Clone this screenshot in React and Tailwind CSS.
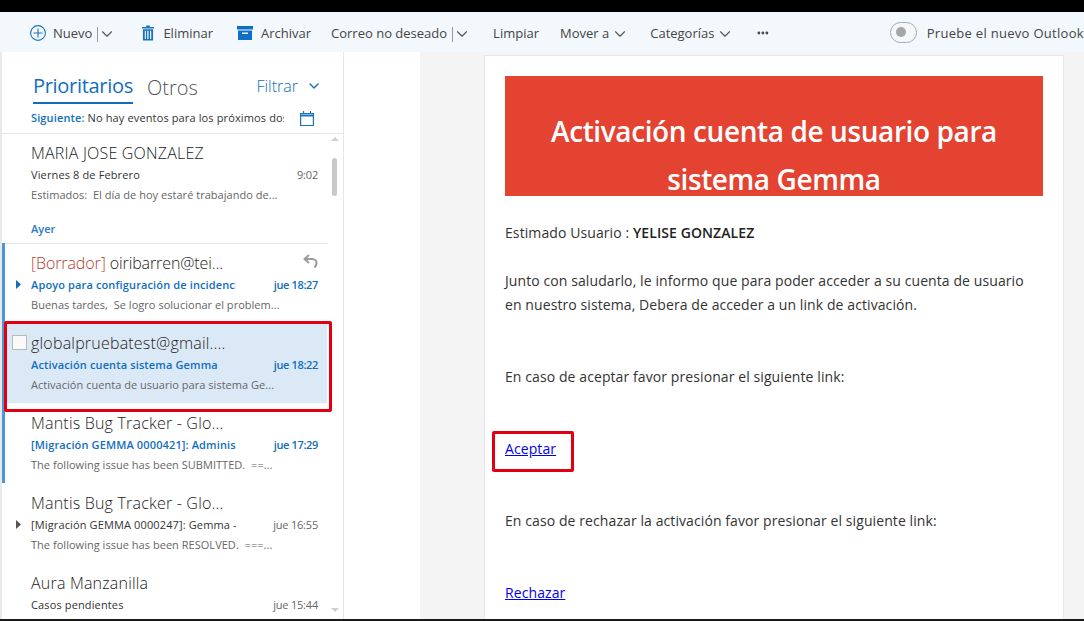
import { ChevronDown, Ellipsis } from 'lucide-react'

const font = { fontFamily: '"Open Sans", "Noto Sans", sans-serif' }

function ToolbarItem({ icon, label, split, caret, className = '' }) {
  return (
    <div className={`flex items-center text-[13px] text-[#444] ${className}`}>
      {icon}
      <span>{label}</span>
      {split && <span className="ml-[5px] h-[15px] w-px bg-[#999]"></span>}
      {caret && <ChevronDown size={18} strokeWidth={1.5} className={`text-[#555] ${split ? '' : 'ml-[2px]'}`} />}
    </div>
  )
}

function Row({ name, draft, subject, time, preview, unread, bar, selected, expand, reply, check }) {
  return (
    <div className={`relative h-20 w-[325px] pl-[29px] pr-[9px] ${selected ? 'bg-[#dbe9f7]' : ''}`}>
      {bar && <div className="absolute left-0 top-0 h-full w-[3px] bg-[#4a98d8]"></div>}
      {check && <div className="absolute left-[10px] top-[12px] h-[15px] w-[15px] border border-[#b9b9b9] bg-[#f9f9f9]"></div>}
      {expand && (
        <svg className="absolute left-[14px] top-[37px]" width="5" height="9" viewBox="0 0 5 9">
          <path d="M0 0l5 4.5L0 9z" fill={unread ? '#106ebe' : '#555'} />
        </svg>
      )}
      {reply && (
        <svg className="absolute right-[9px] top-[11px]" width="15" height="14" viewBox="0 0 15 14" fill="none" stroke="#9a9a9a" strokeWidth="2">
          <path d="M6 1L1.5 5 6 9" />
          <path d="M2 5h7c3 0 4.500 2 4.500 4s-1 3.500-2 4.500" />
        </svg>
      )}
      <div className={`h-[32px] whitespace-nowrap pt-[8px] text-[16px] font-light leading-[24px] text-[#222] ${draft ? 'tracking-[-0.1px]' : 'tracking-[0.2px]'}`}>
        {draft && <span className="text-[#b5392b]">[Borrador] </span>}
        {name}
      </div>
      <div className="flex h-[20px] items-center justify-between text-[11px] leading-[20px]">
        <span className={`w-[205px] overflow-hidden whitespace-nowrap tracking-[0.13px] ${unread ? 'font-semibold text-[#106ebe]' : 'text-[#333]'}`}>{subject}</span>
        <span className={unread ? 'font-semibold tracking-[-0.35px] text-[#106ebe]' : 'tracking-[-0.2px] text-[#666]'}>{time}</span>
      </div>
      <div className="whitespace-pre text-[11px] leading-[20px] tracking-[0.03px] text-[#666]">{preview}</div>
    </div>
  )
}

export default function App() {
  return (
    <div style={font} className="relative flex h-[621px] w-[1084px] flex-col overflow-hidden bg-white">
      <div className="h-3 shrink-0 bg-black"></div>

      {/* toolbar */}
      <div className="flex h-[40px] shrink-0 items-center whitespace-nowrap bg-[#f3f8fc] pl-[30px] pt-[4px]">
        <ToolbarItem
          label="Nuevo"
          split
          caret
          icon={
            <svg className="mr-[7px] -mt-[2px]" width="16" height="16" viewBox="0 0 16 16" fill="none" stroke="#1a73bd" strokeWidth="1.1">
              <circle cx="8" cy="8" r="7.400" />
              <path d="M8 3.500v9M3.500 8h9" />
            </svg>
          }
        />
        <ToolbarItem
          className="ml-[26px]"
          label="Eliminar"
          icon={
            <svg className="mr-[9px] -mt-[2px]" width="12" height="16" viewBox="0 0 13 16" fill="#1a73bd">
              <path d="M4.500 0h4v1.500H13v1.500H0V1.500h4.500z" />
              <path d="M1 4h11v12H1zM3 5.500v9h1.200v-9zm2.700 0v9h1.400v-9zm3 0v9h1.300v-9z" fillRule="evenodd" />
            </svg>
          }
        />
        <ToolbarItem
          className="ml-[24px]"
          label="Archivar"
          icon={
            <svg className="mr-[8px] -mt-[2px]" width="16" height="14" viewBox="0 0 16 14" fill="#0f6fc6">
              <path d="M0 0h16v3.500H0z" />
              <path d="M1 4.500h14V14H1zM5 6.500v1.500h6V6.500z" fillRule="evenodd" />
            </svg>
          }
        />
        <ToolbarItem className="ml-[20px]" label="Correo no deseado" split caret />
        <ToolbarItem className="ml-[22px]" label="Limpiar" />
        <ToolbarItem className="ml-[21px]" label="Mover a" caret />
        <ToolbarItem className="ml-[21px]" label="Categorías" caret />
        <Ellipsis size={24} strokeWidth={3} className="ml-[22px] -mt-[2px] text-[#444]" />
        <div className="ml-[120px] -mt-[4px] flex h-[21px] w-[41px] items-center rounded-full border border-[#aaa] pl-[5px]">
          <div className="h-[10px] w-[10px] rounded-full bg-[#a6a6a6]"></div>
        </div>
        <div className="ml-[10px] text-[13px] tracking-[0.3px] text-[#444]">Pruebe el nuevo Outlook</div>
      </div>

      <div className="flex min-h-0 flex-1">
        {/* message list */}
        <div className="relative w-[344px] shrink-0 border-r border-l-2 border-[#e6e6e6] border-l-[#e9e9e9] bg-white">
          <div className="flex h-[52px] items-end pl-[31px] pr-[21px]">
            <div className="border-b-2 border-[#106ebe] pb-[1px] text-[20px] leading-[30px] tracking-[-0.3px] text-[#106ebe]">Prioritarios</div>
            <div className="ml-[14px] pb-[1px] text-[20px] font-light leading-[30px] text-[#555]">Otros</div>
            <div className="ml-auto flex items-center pb-[6px] text-[16px] font-light leading-[24px] text-[#106ebe]">
              Filtrar
              <ChevronDown size={16} strokeWidth={2} className="ml-[8px]" />
            </div>
          </div>
          <div className="-mb-px flex h-[30px] items-center border-b border-[#e6e6e6] pl-[29px]">
            <div className="w-[253px] overflow-hidden whitespace-nowrap text-[11px] tracking-[0.13px] text-[#333]">
              <span className="font-semibold text-[#106ebe]">Siguiente: </span>
              No hay eventos para los próximos dos días
            </div>
            <svg className="ml-[16px] -mt-[1px]" width="14" height="15" viewBox="0 0 14 15" fill="none" stroke="#1a73bd" strokeWidth="1.200">
              <path d="M.6 2.500h12.800v12H.6z" />
              <path d="M.6 4.500h12.800" strokeWidth="2" />
              <path d="M3.500 0v3M10.500 0v3" />
            </svg>
          </div>

          <Row name="MARIA JOSE GONZALEZ" subject="Viernes 8 de Febrero" time="9:02" preview="Estimados:  El día de hoy estaré trabajando de..." />
          <div className="-mb-px h-[31px] w-[325px] border-b border-[#e6e6e6] pl-[29px] pt-[6px] text-[11px] font-semibold leading-[20px] text-[#2a7ac4]">Ayer</div>
          <Row bar unread expand reply draft name="oiribarren@tei..." subject="Apoyo para configuración de incidencia" time="jue 18:27" preview="Buenas tardes,  Se logro solucionar el problem..." />
          <Row bar unread selected check name="globalpruebatest@gmail...." subject="Activación cuenta sistema Gemma" time="jue 18:22" preview="Activación cuenta de usuario para sistema Ge..." />
          <Row bar unread name="Mantis Bug Tracker - Glo..." subject="[Migración GEMMA 0000421]: Administrar" time="jue 17:29" preview="The following issue has been SUBMITTED.  ==..." />
          <Row expand name="Mantis Bug Tracker - Glo..." subject="[Migración GEMMA 0000247]: Gemma - Error" time="jue 16:55" preview="The following issue has been RESOLVED.  ===..." />
          <Row name="Aura Manzanilla" subject="Casos pendientes" time="jue 15:44" preview="" />

          {/* scrollbar */}
          <div className="absolute left-[330px] top-[106px] h-[38px] w-[5px] rounded-sm bg-[#c8c8c8]"></div>
          <div className="absolute left-[329px] top-[85px] h-0 w-0 border-x-[4px] border-b-[4px] border-x-transparent border-b-[#d0d0d0]"></div>
          <div className="absolute left-[329px] top-[556px] h-0 w-0 border-x-[4px] border-t-[4px] border-x-transparent border-t-[#d0d0d0]"></div>
        </div>

        <div className="w-[76px] shrink-0 bg-white"></div>

        {/* reading pane */}
        <div className="min-w-0 flex-1 bg-[#f4f4f4] pl-[64px] pr-[20px] pt-[3px]">
          <div className="h-[580px] overflow-hidden border border-[#e8e8e8] bg-white px-[20px] pt-[20px]">
            <div className="h-[120px] overflow-hidden bg-[#e44332] px-[20px] pt-[31px] text-center text-[28px] font-semibold leading-[48px] tracking-[-0.4px] text-white">
              Activación cuenta de usuario para sistema Gemma
            </div>
            <div className="text-[14px] tracking-[0.09px] text-[#333]">
              <p className="mt-[25px] leading-[24px]">Estimado Usuario : <b className="font-semibold text-[#222]">YELISE GONZALEZ</b></p>
              <p className="mt-[24px] leading-[24px]">
                Junto con saludarlo, le informo que para poder acceder a su cuenta de usuario<br />
                en nuestro sistema, Debera de acceder a un link de activación.
              </p>
              <p className="mt-[48px] leading-[24px]">En caso de aceptar favor presionar el siguiente link:</p>
              <p className="mt-[48px] leading-[24px]"><a href="#" className="text-[#0000ee] underline">Aceptar</a></p>
              <p className="mt-[48px] leading-[24px]">En caso de rechazar la activación favor presionar el siguiente link:</p>
              <p className="mt-[48px] leading-[24px]"><a href="#" className="text-[#0000ee] underline">Rechazar</a></p>
            </div>
          </div>
        </div>
      </div>

      <div className="h-[2px] shrink-0 bg-[#1a1a1a]"></div>

      {/* red highlight boxes drawn over the capture */}
      <div className="absolute left-[4px] top-[321px] h-[91px] w-[328px] rounded-[2px] border-[3px] border-[#e00012]"></div>
      <div className="absolute left-[492px] top-[431px] h-[41px] w-[82px] rounded-[2px] border-[3px] border-[#e00012]"></div>
    </div>
  )
}
